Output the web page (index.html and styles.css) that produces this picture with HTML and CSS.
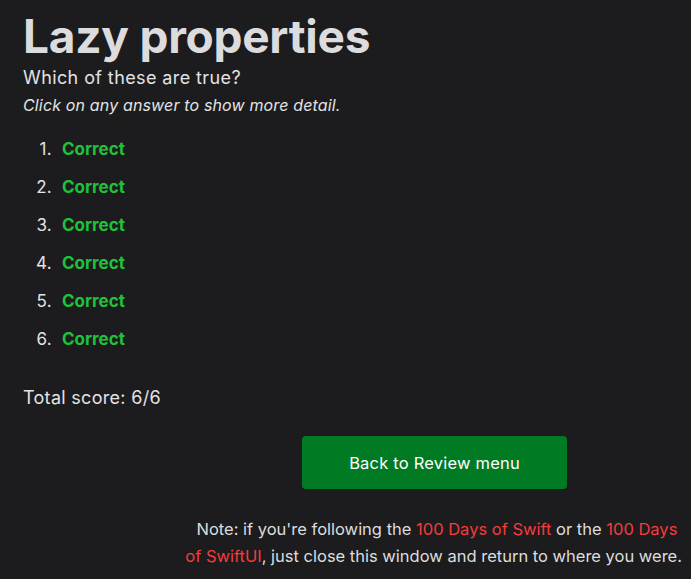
FILE: index.html
```html
<!DOCTYPE html>
<html lang="en">
<head>
<meta charset="utf-8">
<title>Lazy properties</title>
<link rel="stylesheet" href="styles.css">
</head>
<body>
<main class="page">
  <h1 class="title">Lazy properties</h1>
  <p class="question">Which of these are true?</p>
  <p class="hint">Click on any answer to show more detail.</p>
  <ol class="answers">
    <li class="answer"><span class="correct">Correct</span></li>
    <li class="answer"><span class="correct">Correct</span></li>
    <li class="answer"><span class="correct">Correct</span></li>
    <li class="answer"><span class="correct">Correct</span></li>
    <li class="answer"><span class="correct">Correct</span></li>
    <li class="answer"><span class="correct">Correct</span></li>
  </ol>
  <p class="score">Total score: 6/6</p>
  <div class="actions">
    <a class="back-button" href="#">Back to Review menu</a>
  </div>
  <p class="note">Note: if you're following the <a class="link" href="#">100 Days of Swift</a> or the <a class="link" href="#">100 Days of SwiftUI</a>, just close this window and return to where you were.</p>
</main>
</body>
</html>
```
FILE: styles.css
```css
html, body {
  margin: 0;
  padding: 0;
  background: #1c1c1e;
}
body {
  font-family: "Inter", "Liberation Sans", sans-serif;
  color: #e3e3e5;
}
.page {
  padding: 8px 9px 0 23px;
}
.title {
  margin: 0;
  font-size: 46px;
  font-weight: 700;
  line-height: 56px;
  letter-spacing: -0.25px;
  color: #dcdcde;
}
.question {
  margin: 0;
  font-size: 18px;
  line-height: 28px;
  letter-spacing: 0.4px;
}
.hint {
  margin: 0;
  font-size: 16px;
  font-style: italic;
  line-height: 26px;
  letter-spacing: 0.15px;
}
.answers {
  margin: 20px 0 0 0;
  padding: 0;
  list-style: none;
  counter-reset: answer;
  font-size: 17px;
}
.answer {
  display: flex;
  align-items: baseline;
  line-height: 22px;
  margin-bottom: 16px;
  counter-increment: answer;
}
.answer::before {
  content: counter(answer) ".";
  width: 29px;
  padding-right: 10px;
  text-align: right;
  color: #e3e3e5;
  letter-spacing: 0.3px;
}
.correct {
  color: #1fc23a;
  font-weight: 700;
}
.score {
  margin: 36px 0 0 0;
  font-size: 18px;
  line-height: 24px;
  letter-spacing: 0.3px;
}
.actions {
  margin-top: 26px;
  padding-left: 279px;
}
.back-button {
  display: flex;
  align-items: center;
  justify-content: center;
  width: 265px;
  height: 53px;
  background: #007a23;
  border-radius: 4px;
  color: #ffffff;
  font-size: 16.5px;
  letter-spacing: 0.2px;
  text-decoration: none;
}
.note {
  margin: 27px 0 0 auto;
  max-width: 500px;
  text-align: right;
  white-space: break-spaces;
  font-size: 16.5px;
  line-height: 27px;
  letter-spacing: 0;
  color: #dcdcde;
}
.link {
  color: #f53b3b;
  text-decoration: none;
}
```
